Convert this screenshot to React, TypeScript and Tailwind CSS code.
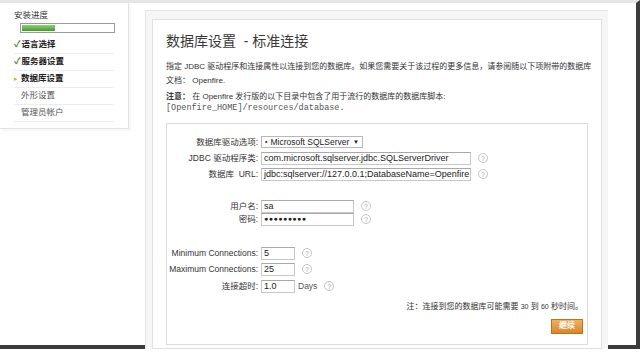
import React from 'react';

const Help = () => (
  <span className="ml-[7px] inline-flex h-[10px] w-[10px] items-center justify-center rounded-full border border-[#c4c4c4] text-[7px] leading-none text-[#a8a8a8]">
    ?
  </span>
);

interface RowProps {
  label: string;
  children: React.ReactNode;
  className?: string;
}

const Row: React.FC<RowProps> = ({ label, children, className }) => (
  <div className={`flex items-center ${className ?? ''}`}>
    <div className="w-[94px] shrink-0 whitespace-pre pr-[3px] text-right text-[8.5px] text-[#333]">{label}</div>
    {children}
  </div>
);

const Field = ({ value, width, dots }: { value: string; width: string; dots?: boolean }) => (
  <div
    className={`flex h-[13px] items-center border border-[#c8c8c8] border-t-[#a8a8a8] bg-white px-[2px] text-[#222] ${width} ${dots ? 'text-[7px] tracking-[0.5px]' : 'text-[9px]'}`}
  >
    {value}
  </div>
);

const steps = [
  { label: '语言选择', state: 'done' },
  { label: '服务器设置', state: 'done' },
  { label: '数据库设置', state: 'current' },
  { label: '外形设置', state: 'todo' },
  { label: '管理员帐户', state: 'todo' },
];

export default function App() {
  return (
    <div className="h-[353px] w-[644px] overflow-hidden bg-white font-['Liberation_Sans','Noto_Sans_CJK_SC',sans-serif]">
      <div className="flex h-[349px] w-[640px] border-r-[4px] border-b-[4px] border-r-[#3c3c3c] border-b-[#3c3c3c] border-t-[3px] border-t-[#e6e6e6]">
        {/* sidebar */}
        <div className="w-[145px] shrink-0">
          <div className="h-[126px] w-[129px] border-r border-b border-[#e2e2e2] bg-white px-[14px] pt-[6px] shadow-[2px_2px_2px_rgba(0,0,0,0.04)]">
            <div className="text-[8.5px] text-[#333]">安装进度</div>
            <div className="ml-[6px] mt-[1px] h-[10px] w-[95px] border border-[#9a9a9a] bg-white p-px">
              <div className="h-full w-[33px] bg-gradient-to-b from-[#8fd07a] to-[#3f9a2c]" />
            </div>
            <div className="mt-[4px]">
              {steps.map((s) => (
                <div key={s.label} className="flex h-[17px] items-center border-b border-[#ececec] text-[8.5px]">
                  {s.state === 'done' && <span className="mr-px text-[9px] font-bold text-[#3d8a2a]">✓</span>}
                  {s.state === 'current' && <span className="mr-[3px] text-[7px] text-[#e8a236]">▸</span>}
                  {s.state === 'todo' && <span className="w-[7px]" />}
                  <span className={s.state === 'todo' ? 'text-[#555]' : 'font-bold text-[#222]'}>{s.label}</span>
                </div>
              ))}
            </div>
          </div>
        </div>

        {/* main */}
        <div className="mt-[7px] h-[339px] w-[463px] shrink-0 border-l border-t border-[#e4e4e4] bg-[#f6f6f6] px-[6px] pt-[8px]">
          <div className="h-full border border-[#e0e0e0] bg-white px-[13px] pt-[12px]">
            <h1 className="text-[14px] leading-[18px] text-[#3a3a3a]">数据库设置&nbsp;&nbsp;- 标准连接</h1>
            <p className="mr-[-6px] mt-[10px] text-[8px] leading-[14px] text-[#333]">
              指定 JDBC 驱动程序和连接属性以连接到您的数据库。如果您需要关于该过程的更多信息，请参阅随以下项附带的数据库
              <br />
              文档： Openfire.
            </p>
            <p className="mt-[3px] text-[8px] leading-[11px] text-[#333]">
              <b>注意：</b> 在 Openfire 发行版的以下目录中包含了用于流行的数据库的数据库脚本:
              <br />
              <span className="font-['Liberation_Mono',monospace] text-[8.5px] text-[#555]">[Openfire_HOME]/resources/database.</span>
            </p>

            <div className="mt-[9px] h-[222px] border border-[#dcdcdc] bg-white pt-[12px] pr-[4px]">
              <Row label="数据库驱动选项:">
                <div className="flex h-[12px] w-[102px] items-center border border-[#b8b8b8] px-[3px] text-[8.5px] text-[#222]">
                  <span className="mr-[3px] text-[7px]">•</span>Microsoft SQLServer
                  <span className="ml-auto text-[6px]">▼</span>
                </div>
              </Row>
              <Row label="JDBC 驱动程序类:" className="mt-[3px]">
                <Field value="com.microsoft.sqlserver.jdbc.SQLServerDriver" width="w-[210px]" />
                <Help />
              </Row>
              <Row label="数据库  URL:" className="mt-[3px]">
                <Field value="jdbc:sqlserver://127.0.0.1;DatabaseName=Openfire" width="w-[210px]" />
                <Help />
              </Row>

              <Row label="用户名:" className="mt-[19px]">
                <Field value="sa" width="w-[93px]" />
                <Help />
              </Row>
              <Row label="密码:">
                <Field value="●●●●●●●●●" width="w-[93px]" dots />
                <Help />
              </Row>

              <Row label="Minimum Connections:" className="mt-[21px]">
                <Field value="5" width="w-[34px]" />
                <Help />
              </Row>
              <Row label="Maximum Connections:" className="mt-[3px]">
                <Field value="25" width="w-[34px]" />
                <Help />
              </Row>
              <Row label="连接超时:" className="mt-[4px]">
                <Field value="1.0" width="w-[34px]" />
                <span className="ml-[3px] text-[8.5px] text-[#555]">Days</span>
                <Help />
              </Row>

              <div className="mt-[8px] text-right text-[8px] text-[#333]">
                注：连接到您的数据库可能需要 <span className="text-[7px]">30</span> 到 <span className="text-[7px]">60</span> 秒时间。
              </div>
              <div className="mt-[6px] flex justify-end">
                <button className="h-[15px] w-[32px] border border-[#c07020] bg-gradient-to-b from-[#f0b060] to-[#d9862a] text-[8px] font-bold text-white">
                  继续
                </button>
              </div>
            </div>
          </div>
        </div>
      </div>
    </div>
  );
}
